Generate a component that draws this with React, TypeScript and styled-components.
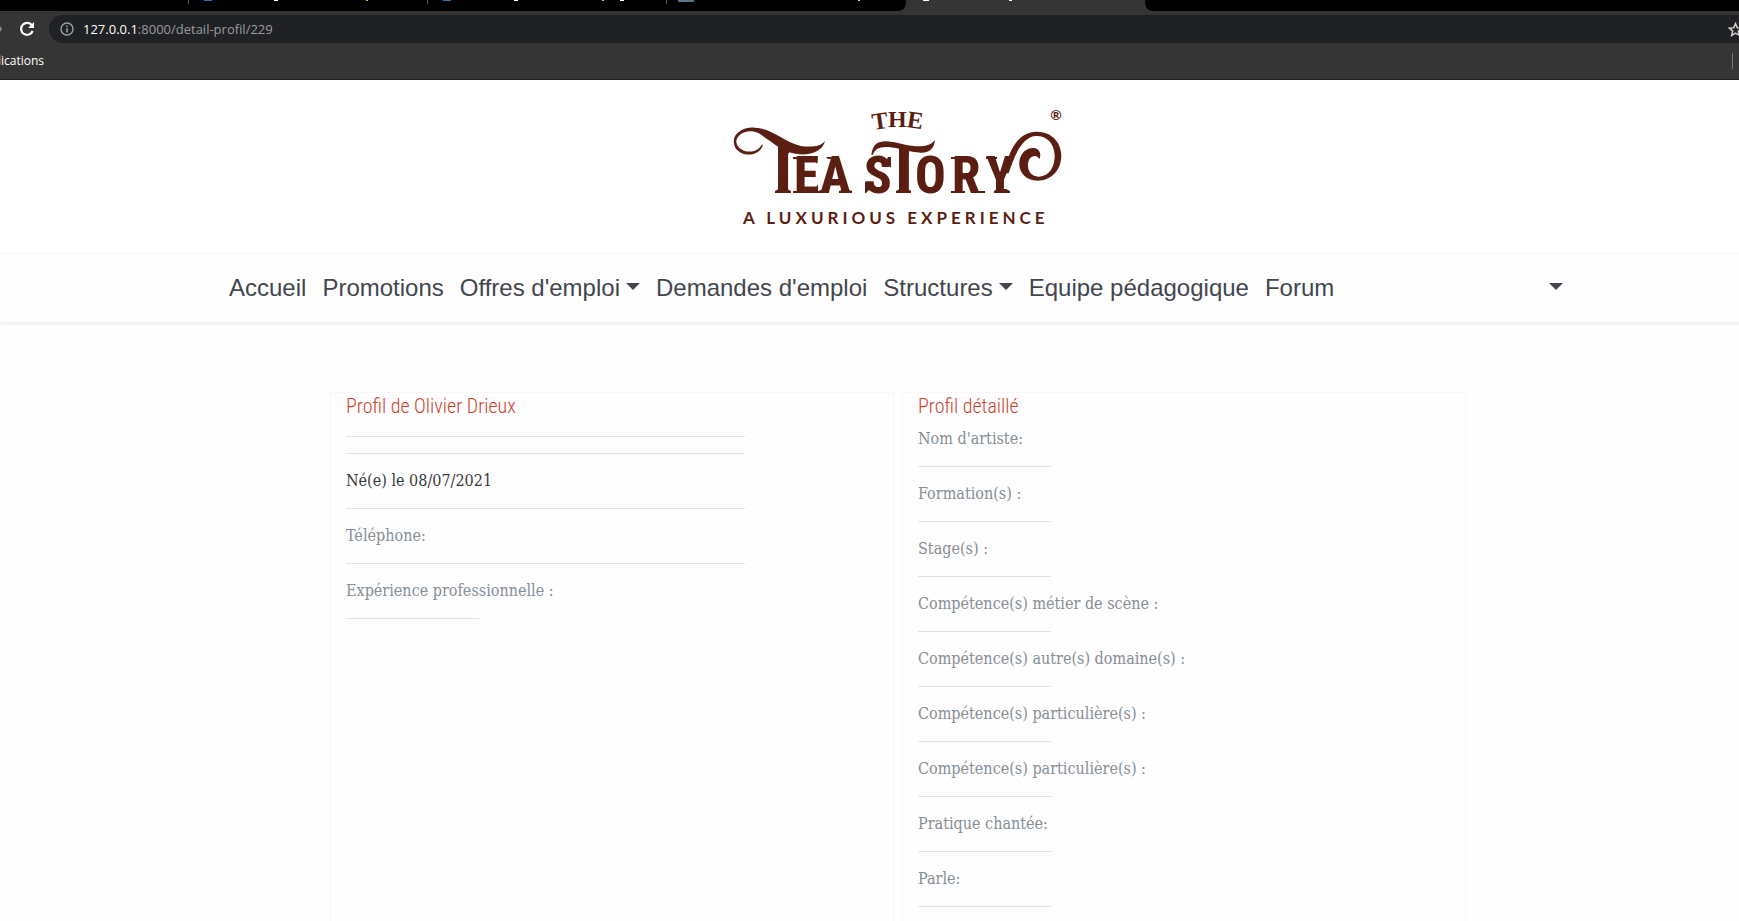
import React from "react";
import styled, { createGlobalStyle } from "styled-components";

const GlobalStyle = createGlobalStyle`
  *, *::before, *::after { box-sizing: border-box; }
  html, body, #root { height: 100%; }
  body { margin: 0; overflow: hidden; background: #fff; }
  button { border: 0; padding: 0; background: none; font: inherit; color: inherit; cursor: pointer; }
`;

const Shell = styled.div`
  display: flex;
  flex-direction: column;
  height: 100%;
  overflow: hidden;
`;

/* ---------- Browser bars ---------- */

const TabStrip = styled.div`
  display: flex;
  flex: none;
  height: 11px;
  overflow: hidden;
  background: #353535;
`;

const Tab = styled.button<{ $active?: boolean; $first?: boolean; $divider?: boolean }>`
  display: flex;
  align-items: flex-start;
  flex: none;
  width: ${(p) => (p.$first ? 189 : 239)}px;
  height: 11px;
  background: ${(p) => (p.$active ? "#353535" : "#000")};
  border-radius: ${(p) => (p.$divider || p.$active ? "0" : "0 0 8px 0")};

  &::after {
    content: "";
    width: 1px;
    height: 4px;
    margin-left: auto;
    background: ${(p) => (p.$divider ? "#5a5a5a" : "transparent")};
  }
`;

const StripRest = styled.div`
  flex: 1;
  background: #000;
  border-bottom-left-radius: 8px;
`;

const Toolbar = styled.div`
  display: flex;
  flex: none;
  align-items: center;
  height: 36px;
  overflow: hidden;
  background: #353535;
`;

const ForwardButton = styled.button`
  display: flex;
  width: 3px;
  margin-right: 16px;
`;

const ReloadButton = styled.button`
  display: flex;
  margin-right: 14px;
`;

const AddressBar = styled.label`
  display: flex;
  flex: 1;
  align-items: center;
  height: 28px;
  padding-left: 11px;
  background: #202124;
  border-radius: 14px 0 0 14px;
  font: 13px/28px "Open Sans", sans-serif;
  color: #fff;
`;

const Host = styled.span`
  margin-left: 9px;
`;

const PathInput = styled.input`
  flex: 1;
  min-width: 0;
  height: 28px;
  padding: 0;
  border: 0;
  outline: 0;
  background: transparent;
  font: inherit;
  color: #9a9c9f;
`;

const StarButton = styled.button`
  display: flex;
  flex: none;
  margin-right: -4px;
`;

const BookmarksBar = styled.div`
  display: flex;
  flex: none;
  align-items: center;
  justify-content: space-between;
  height: 33px;
  padding: 0 6px 4px 0;
  background: #353535;
  border-bottom: 1px solid #1f1f1f;
`;

const Bookmark = styled.button`
  display: flex;
  justify-content: flex-end;
  width: 44px;
  overflow: hidden;
  white-space: nowrap;
  font: 12px/16px "Open Sans", sans-serif;
  color: #fff;
`;

const BarDivider = styled.span`
  width: 1px;
  height: 16px;
  background: #777;
`;

/* ---------- Site ---------- */

const Site = styled.div`
  flex: 1;
  width: calc(100% + 57px);
  background: #fefefe;
`;

const LogoBand = styled.header`
  display: flex;
  justify-content: center;
  padding: 20px 0 19px;
  background: #fff;
  border-bottom: 1px solid #fafafa;
`;

const NavBand = styled.nav`
  height: 68px;
  padding: 8px 0;
  background: #fefefe;
  box-shadow: 0 2px 4px rgba(0, 0, 0, 0.08);
`;

const NavInner = styled.div`
  display: flex;
  align-items: center;
  max-width: 1354px;
  margin: 0 auto;
  padding-right: 4px;
  font: 24px/36px "Liberation Sans", Arial, sans-serif;
  color: #43464d;
`;

const NavLink = styled.a`
  padding: 8px;
  color: inherit;
  text-decoration: none;
  white-space: nowrap;
`;

const NavToggle = styled.button<{ $end?: boolean }>`
  display: flex;
  align-items: center;
  gap: 6px;
  height: 52px;
  padding: 8px;
  margin-left: ${(p) => (p.$end ? "auto" : "0")};
  white-space: nowrap;

  &::after {
    content: "";
    margin-top: -4px;
    border: 7px solid transparent;
    border-top-color: currentColor;
    border-bottom: 0;
  }
`;

const Columns = styled.main`
  display: grid;
  grid-template-columns: 1fr 1fr;
  gap: 8px;
  max-width: 1136px;
  margin: 70px auto 0;
`;

const Card = styled.section`
  min-height: 640px;
  padding: 0 15px;
  border: 1px solid #f7f7f7;
  font: 16px/22px "DejaVu Serif Condensed", "DejaVu Serif", serif;
  color: #868e96;
`;

const CardTitle = styled.h2`
  margin: 0 0 8px;
  font: 300 20px/27px "Roboto Condensed", sans-serif;
  color: #cb3f2b;
`;

const Rule = styled.hr<{ $wide?: boolean }>`
  width: ${(p) => (p.$wide ? "75%" : "25%")};
  height: 1px;
  margin: 16px auto 16px 0;
  border: 0;
  background: #e1e1e1;
`;

const Field = styled.p<{ $strong?: boolean }>`
  margin: 0;
  color: ${(p) => (p.$strong ? "#373a3c" : "inherit")};
`;

type Bit = [x: number, width: number, height: number, color: string];

const tabs: { name: string; first?: boolean; divider?: boolean; active?: boolean; bits: Bit[] }[] = [
  { name: "Onglet 1", first: true, divider: true, bits: [] },
  { name: "Onglet 2", divider: true, bits: [[15, 8, 1, "#3b74a4"], [85, 4, 1, "#fff"], [177, 2, 1, "#e5b566"]] },
  { name: "Onglet 3", divider: true, bits: [[15, 8, 1, "#3b74a4"], [86, 4, 1, "#fff"], [174, 2, 1, "#e5b566"], [192, 4, 1, "#fff"]] },
  { name: "Onglet 4", bits: [[11, 16, 2, "#5f7480"], [191, 2, 1, "#d5e2ee"]] },
  { name: "Onglet 5", active: true, bits: [[17, 6, 1, "#fff"], [103, 3, 1, "#fff"]] },
];

const details = [
  "Nom d'artiste:",
  "Formation(s) :",
  "Stage(s) :",
  "Compétence(s) métier de scène :",
  "Compétence(s) autre(s) domaine(s) :",
  "Compétence(s) particulière(s) :",
  "Compétence(s) particulière(s) :",
  "Pratique chantée:",
  "Parle:",
];

function TabBits({ bits }: { bits: Bit[] }) {
  return (
    <svg width="230" height="3" aria-hidden="true">
      {bits.map(([x, w, h, fill]) => (
        <rect key={x} x={x} y="0" width={w} height={h} fill={fill} />
      ))}
    </svg>
  );
}

function Logo() {
  const ink = "#5a1f12";
  return (
    <svg width="336" height="134" viewBox="0 0 336 134" role="img" aria-label="The Tea Story, a luxurious experience">
      <defs>
        <clipPath id="stem1"><rect x="48" y="44" width="11" height="52" /></clipPath>
        <clipPath id="stem2"><rect x="169" y="46" width="10" height="50" /></clipPath>
      </defs>
      <g fill={ink}>
        <g fontFamily="Liberation Serif, serif" fontWeight="700" fontSize="24">
          <text x="142" y="29" transform="rotate(-8 150 22)">T</text>
          <text x="158" y="27">H</text>
          <text x="177" y="28" transform="rotate(8 184 22)">E</text>
        </g>
        <g fontFamily="Roboto Condensed, sans-serif" fontWeight="800">
          <text x="53" y="93" fontSize="66" textAnchor="middle" clipPath="url(#stem1)">T</text>
          <text x="64 90" y="93" fontSize="51">EA</text>
          <text x="134" y="93" fontSize="51">S</text>
          <text x="174" y="93" fontSize="64" textAnchor="middle" clipPath="url(#stem2)">T</text>
          <text x="185 222 256" y="93" fontSize="51">ORY</text>
        </g>
        <path d="M45 93v-2l4-2h8l4 2v2zM63 93v-2h8v2zM63 57h8v2h-8zM85 57h2v7l-3-5zM86 93h2v-9l-4 7zM88 93v-2l3-1h5l3 1v2zM109 93v-2l3-1h7l3 1v2zM96 57h5v2h-3zM166 93v-2l4-2h8l3 2v2zM221 93v-2h14v2zM221 57h8v2h-8zM244 93v-2h11v2zM264 93v-2l3-2h9l4 2v2zM256 57h11v2h-11zM158 57h3v11l-5-7zM136 93h-1v-12l5 8z" />
        <g transform="scale(.3333)">
          <path d="M99 134C90 168 38 175 16 143C-2 107 35 79 75 83C130 87 160 125 212 138C248 143 275 138 285 122C281 147 253 165 208 163C160 159 128 126 85 99C58 86 24 97 19 122C17 155 76 170 95 134Z" />
          <path d="M424 164C428 133 444 124 466 124C495 124 535 140 565 139C590 139 605 133 615 120C613 145 599 159 573 158C540 157 505 143 475 141C448 139 433 148 429 164Z" />
          <path d="M822 220C836 152 864 95 920 95C970 95 996 133 994 172C991 215 961 242 923 242C886 242 865 215 868 185C872 155 894 142 912 144C930 147 935 162 928 178C923 164 907 166 899 176C886 199 898 231 927 230C960 229 975 198 974 165C972 130 951 108 920 108C880 108 855 160 836 220Z" />
        </g>
        <text x="13" y="124" fontFamily="Lato, sans-serif" fontWeight="700" fontSize="17" letterSpacing="4">
          A LUXURIOUS EXPERIENCE
        </text>
        <text x="326" y="20" textAnchor="middle" fontFamily="Lato, sans-serif" fontWeight="700" fontSize="14">®</text>
      </g>
    </svg>
  );
}

export default function App() {
  return (
    <>
      <GlobalStyle />
      <Shell>
        <TabStrip>
          {tabs.map((t) => (
            <Tab key={t.name} aria-label={t.name} $first={t.first} $divider={t.divider} $active={t.active}>
              {t.bits.length > 0 && <TabBits bits={t.bits} />}
            </Tab>
          ))}
          <StripRest />
        </TabStrip>
        <Toolbar>
          <ForwardButton aria-label="Avancer">
            <svg width="3" height="6" viewBox="0 0 3 6"><path d="M0 0L2 3L0 6z" fill="#8c8c8c" /></svg>
          </ForwardButton>
          <ReloadButton aria-label="Actualiser">
            <svg width="16" height="16" viewBox="0 0 16 16" fill="none">
              <path d="M13 4.300A6 6 0 1 0 13.700 10" stroke="#fff" strokeWidth="2.200" />
              <path d="M15 1v6H9z" fill="#fff" />
            </svg>
          </ReloadButton>
          <AddressBar>
            <svg width="14" height="14" viewBox="0 0 14 14" fill="none" aria-hidden="true">
              <circle cx="7" cy="7" r="6" stroke="#9aa0a6" strokeWidth="1.400" />
              <path d="M7 6.200v4.300M7 3.400v1.600" stroke="#9aa0a6" strokeWidth="1.600" />
            </svg>
            <Host>127.0.0.1</Host>
            <PathInput aria-label="Adresse" defaultValue=":8000/detail-profil/229" />
            <StarButton aria-label="Ajouter aux favoris">
              <svg width="15" height="15" viewBox="0 0 24 24" fill="none" stroke="#d0d0d0" strokeWidth="2.400">
                <path d="M12 2.500l2.800 6.700 7.200.6-5.500 4.700 1.700 7L12 17.800l-6.200 3.700 1.700-7L2 9.800l7.200-.6z" />
              </svg>
            </StarButton>
          </AddressBar>
        </Toolbar>
        <BookmarksBar>
          <Bookmark>Applications</Bookmark>
          <BarDivider />
        </BookmarksBar>
        <Site>
          <LogoBand>
            <Logo />
          </LogoBand>
          <NavBand>
            <NavInner>
              <NavLink href="#accueil">Accueil</NavLink>
              <NavLink href="#promotions">Promotions</NavLink>
              <NavToggle>Offres d'emploi</NavToggle>
              <NavLink href="#demandes">Demandes d'emploi</NavLink>
              <NavToggle>Structures</NavToggle>
              <NavLink href="#equipe">Equipe pédagogique</NavLink>
              <NavLink href="#forum">Forum</NavLink>
              <NavToggle $end aria-label="Compte" />
            </NavInner>
          </NavBand>
          <Columns>
            <Card>
              <CardTitle>Profil de Olivier Drieux</CardTitle>
              <Rule $wide />
              <Rule $wide />
              <Field $strong>Né(e) le 08/07/2021</Field>
              <Rule $wide />
              <Field>Téléphone:</Field>
              <Rule $wide />
              <Field>Expérience professionnelle :</Field>
              <Rule />
            </Card>
            <Card>
              <CardTitle>Profil détaillé</CardTitle>
              {details.map((d, i) => (
                <React.Fragment key={i}>
                  <Field>{d}</Field>
                  <Rule />
                </React.Fragment>
              ))}
            </Card>
          </Columns>
        </Site>
      </Shell>
    </>
  );
}
